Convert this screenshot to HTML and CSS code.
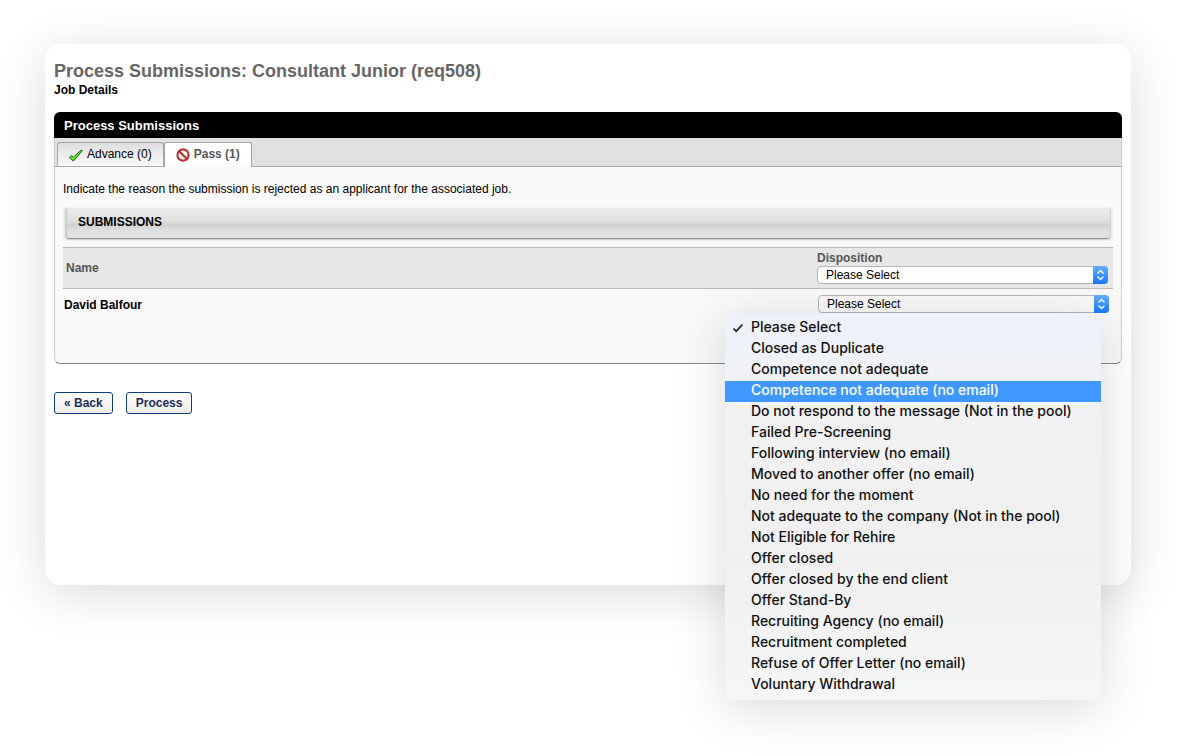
FILE: index.html
```html
<!DOCTYPE html>
<html lang="en">
<head>
<meta charset="utf-8">
<title>Process Submissions</title>
<link rel="stylesheet" href="styles.css">
</head>
<body>
<main class="card">
  <h1 class="title">Process Submissions: Consultant Junior (req508)</h1>
  <a class="details" href="#details">Job Details</a>

  <section class="panel">
    <h2 class="panel-head">Process Submissions</h2>
    <div class="tabs" role="tablist">
      <button class="tab" type="button" role="tab" aria-selected="false">
        <svg class="tab-icon" viewBox="0 0 14 14" aria-hidden="true"><path d="M.6 9 2.600 7.400l1.800 1.700L12 2.200l1.400.5-8.600 10H3.600z" fill="#5fe02a" stroke="#1c5a12" stroke-width=".9" stroke-linejoin="round"/></svg>
        Advance (0)
      </button>
      <button class="tab tab-active" type="button" role="tab" aria-selected="true">
        <svg class="tab-icon" viewBox="0 0 14 14" aria-hidden="true"><circle cx="7" cy="7" r="5.600" fill="#fff" stroke="#bd2f2f" stroke-width="2.100"/><path d="m3 3 8 8" stroke="#bd2f2f" stroke-width="2.200"/></svg>
        Pass (1)
      </button>
    </div>
    <div class="panel-body">
      <p class="hint">Indicate the reason the submission is rejected as an applicant for the associated job.</p>
      <div class="section-frame"><h3 class="section-bar">SUBMISSIONS</h3></div>
      <table class="grid">
        <thead>
          <tr>
            <th class="name-col" scope="col">Name</th>
            <th class="disp-col" scope="col">
              <label class="disp-label" for="all">Disposition</label>
              <div class="picker">
                <select class="select" id="all"><option>Please Select</option></select>
                <svg class="stepper" viewBox="0 0 15 18" aria-hidden="true"><path d="m4.500 7.500 3-3 3 3M4.500 10.500l3 3 3-3" fill="none" stroke="#fff" stroke-width="1.300"/></svg>
              </div>
            </th>
          </tr>
        </thead>
        <tbody>
          <tr>
            <td class="person">David Balfour</td>
            <td class="choice">
              <div class="picker">
                <select class="select select-open" aria-label="Disposition for David Balfour"><option>Please Select</option></select>
                <svg class="stepper" viewBox="0 0 15 18" aria-hidden="true"><path d="m4.500 7.500 3-3 3 3M4.500 10.500l3 3 3-3" fill="none" stroke="#fff" stroke-width="1.300"/></svg>
                <ul class="menu" role="listbox" aria-label="Disposition">
                  <li class="option" role="option" aria-selected="true"><svg class="check" viewBox="0 0 12 12" aria-hidden="true"><path d="m1.500 6.500 2.700 2.700L10.500 2.500" fill="none" stroke="#222" stroke-width="1.700"/></svg>Please Select</li>
                  <li class="option" role="option">Closed as Duplicate</li>
                  <li class="option" role="option">Competence not adequate</li>
                  <li class="option option-active" role="option">Competence not adequate (no email)</li>
                  <li class="option" role="option">Do not respond to the message (Not in the pool)</li>
                  <li class="option" role="option">Failed Pre-Screening</li>
                  <li class="option" role="option">Following interview (no email)</li>
                  <li class="option" role="option">Moved to another offer (no email)</li>
                  <li class="option" role="option">No need for the moment</li>
                  <li class="option" role="option">Not adequate to the company (Not in the pool)</li>
                  <li class="option" role="option">Not Eligible for Rehire</li>
                  <li class="option" role="option">Offer closed</li>
                  <li class="option" role="option">Offer closed by the end client</li>
                  <li class="option" role="option">Offer Stand-By</li>
                  <li class="option" role="option">Recruiting Agency (no email)</li>
                  <li class="option" role="option">Recruitment completed</li>
                  <li class="option" role="option">Refuse of Offer Letter (no email)</li>
                  <li class="option" role="option">Voluntary Withdrawal</li>
                </ul>
              </div>
            </td>
          </tr>
        </tbody>
      </table>
    </div>
  </section>

  <div class="actions">
    <button class="btn" type="button">« Back</button>
    <button class="btn" type="button">Process</button>
  </div>
</main>
</body>
</html>
```
FILE: styles.css
```css
* { box-sizing: border-box; }

body {
  margin: 0;
  padding: 44px 55px 171px 45px;
  background: #fff;
  color: #000;
  font: 12px/14px "Liberation Sans", Arial, sans-serif;
}

h1, h2, h3, p, ul { margin: 0; padding: 0; }
button, select { font: inherit; }

.card {
  padding: 16px 9px 171px;
  border-radius: 16px;
  background: #fff;
  box-shadow: 0 8px 50px rgba(0, 0, 0, .14);
}

.title {
  color: #666;
  font-size: 18px;
  line-height: 22px;
}

.details {
  display: block;
  margin-top: 1px;
  color: #000;
  font-weight: bold;
  text-decoration: none;
}

.panel {
  margin-top: 15px;
  border-radius: 6px;
  background: #f9f9f9;
}

.panel-head {
  padding: 2px 10px 0;
  border-radius: 6px 6px 0 0;
  background: #000;
  color: #fff;
  font-size: 13px;
  line-height: 24px;
}

.tabs {
  display: flex;
  align-items: flex-end;
  height: 29px;
  padding: 0 2px;
  border: 1px solid #aaa;
  border-width: 0 1px 1px;
  border-color: #aaa #ccc;
  background: #e1e1e1;
}

.tab {
  display: flex;
  align-items: center;
  gap: 4px;
  height: 24px;
  padding: 0 11px 2px;
  border: 1px solid #a5a5a5;
  border-bottom: 0;
  border-radius: 3px 3px 0 0;
  background: linear-gradient(#dedede, #fafafa);
  color: #000;
}

.tab-active {
  height: 25px;
  margin-bottom: -1px;
  background: #fff;
  color: #555;
  font-weight: bold;
}

.tab-icon { width: 14px; height: 14px; margin-top: 2px; }

.panel-body {
  padding: 15px 8px 44px;
  border: 1px solid #ccc;
  border-width: 0 1px 1px;
  border-bottom-color: #888;
  border-radius: 0 0 6px 6px;
}

.section-frame {
  margin-top: 12px;
  padding: 0 3px 2px;
  background: #f1f1f1;
}

.section-bar {
  padding: 0 12px 2px;
  border-radius: 0 0 3px 3px;
  background: linear-gradient(#ececec, #dedede 45%, #d0d0d0 55%, #dfdfdf 75%, #e2e2e2);
  box-shadow: 0 1px 2px #777, inset 1px 0 1px #ccc;
  font-size: 12px;
  line-height: 28px;
}

.grid {
  width: 100%;
  margin-top: 7px;
  border-collapse: separate;
  border-spacing: 0;
  table-layout: fixed;
}

.grid th {
  height: 42px;
  padding: 0 5px 0 3px;
  border: 1px solid #bbb;
  border-width: 1px 0;
  background: #e7e7e7;
  color: #555;
  text-align: left;
  vertical-align: middle;
}

.grid .disp-col {
  width: 299px;
  padding-bottom: 4px;
}
.disp-label { display: block; margin-top: 2px; }

.grid td { padding: 6px 4px; }
.grid .person { padding: 7px 1px 5px; font-weight: bold; }

.picker { position: relative; margin-top: 1px; font-weight: normal; }
.choice .picker { margin-top: 0; }

.select {
  display: block;
  appearance: none;
  width: 100%;
  height: 18px;
  padding: 0 8px;
  border: 1px solid #b5b5b5;
  border-radius: 4px;
  background: #fff;
  color: #000;
  line-height: 16px;
}

.select-open { background: #f9f9f9; }

.stepper {
  position: absolute;
  top: 0;
  right: 0;
  width: 15px;
  height: 18px;
  border-radius: 0 4px 4px 0;
  background: linear-gradient(#65aefc, #1679fb);
  pointer-events: none;
}

.menu {
  position: absolute;
  top: 100%;
  right: 8px;
  width: 376px;
  margin-top: 1px;
  padding: 4px 0;
  border-radius: 12px;
  background: linear-gradient(#edf2fa, #f2f2f4 25%, #f0f0f0 65%, #f5f6f6);
  box-shadow: 0 8px 50px rgba(0, 0, 0, .15);
  color: #111;
  font: 500 14px/18px Inter, sans-serif;
  list-style: none;
}

.option { position: relative; padding: 0 26px 3px; white-space: nowrap; }
.option-active { background: #3f98ff; color: #fff; }

.check {
  position: absolute;
  top: 4px;
  left: 7px;
  width: 12px;
  height: 12px;
}

.actions {
  display: flex;
  gap: 13px;
  margin-top: 28px;
}

.btn {
  height: 22px;
  padding: 0 9px;
  border: 1px solid #113c7a;
  border-radius: 3px;
  background: linear-gradient(#fff, #eeebe6);
  color: #1d2d5c;
  font-weight: bold;
}
```
